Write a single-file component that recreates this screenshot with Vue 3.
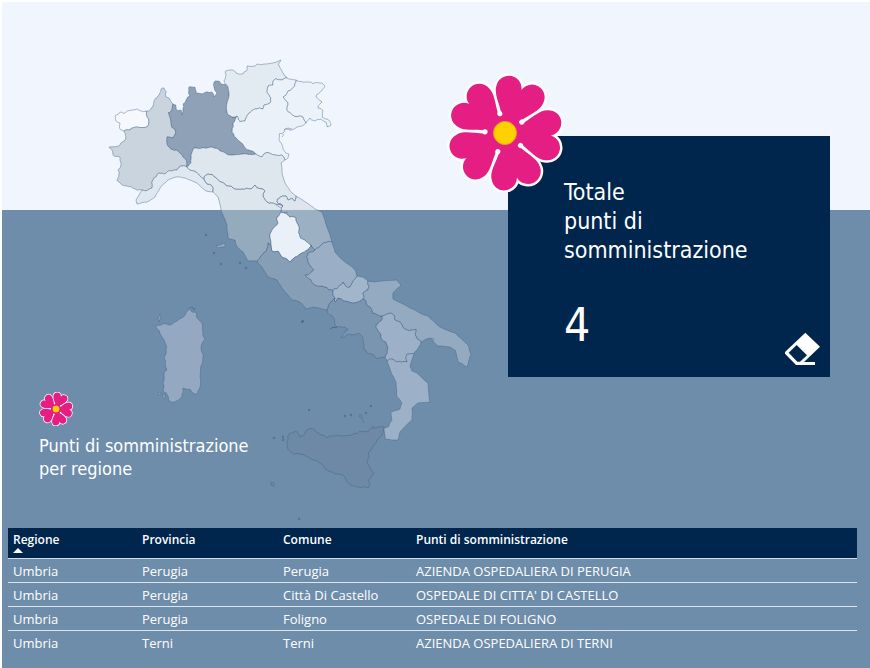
<script setup>
import { ref, computed } from 'vue'

// Border lines shared by neighbouring regions, as x,y pairs.
const arcs = {
  vdaNorth: '124,131 121,130 120,123 116,121 115,116 121,112 125,113 137,109 146,111',
  vdaSouth: '146,111 147,117 149,122 148,126 137,127 130,130 124,131',
  pieNorth: '146,111 153,107 154,101 159,95 161,89 164,88 166,97 173,104',
  pieLom: '173,104 172,110 168,113 171,121 173,128 176,134 173,138 167,137 167,143 171,149 177,150 183,157 187,163 187,167',
  pieLig: '187,167 180,166 177,170 172,171 165,174 159,173 153,180 152,188 142,190',
  pieWest: '142,190 135,189 127,186 121,184 117,180 118,170 121,163 120,157 113,155 109,147 120,145 126,137 124,131',
  ligCoast: '213,192 206,191 197,183 185,178 176,177 168,180 160,188 155,197 147,202 137,204 136,200 142,190',
  ligTos: '204,179 207,184 212,186 213,192',
  ligEmi: '187,167 195,171 200,176 204,179',
  lomNorth: '173,104 176,105 176,109 180,110 182,115 183,110 183,104 190,96 189,87 195,87 196,93 202,94 212,92 214,97 217,93 214,87 214,82 219,81 221,84 228,87',
  lomTre: '228,87 229,93 227,103 228,115 237,116',
  lomVen: '237,116 233,123 232,132 237,139 244,146 249,150 256,154',
  lomEmi: '256,154 243,154 230,155 220,151 212,147 202,148 194,148 191,155 191,163 187,167',
  treNorth: '228,87 224,81 225,72 233,70 236,73 243,74 247,66 257,64 265,64 281,60 278,64 283,73 287,78',
  treVen: '287,78 281,80 275,79 273,85 268,86 267,92 271,98 270,103 264,105 263,109 255,109 249,113 245,121 240,122 237,116',
  venNorth: '287,78 296,80',
  venFri: '296,80 295,84 288,91 283,97 288,103 287,110 294,116 303,117 306,123',
  friCoast: '296,80 307,82 320,83 325,86 320,92 316,97 322,102 318,108 323,111 322,117 327,119 331,125 327,127 326,122 321,119 315,121 310,118 306,123',
  venCoast: '306,123 297,127 289,130 285,129 283,133 279,134 279,140 282,144 283,149 289,154 285,160',
  venEmi: '256,154 262,157 265,153 282,155 285,160',
  emiCoast: '285,160 281,163 282,173 285,183 292,193 296,196',
  emiMar: '296,196 295,201 292,198 288,200 286,196 280,197 277,202 283,206',
  emiTos: '283,206 275,204 267,202 263,196 265,191 255,185 251,189 242,189 233,188 225,184 215,177 208,174 204,179',
  tosCoast: '213,192 218,197 221,210 223,215 227,225 228,238 235,240 236,245 243,252 248,261 257,261',
  tosMar: '283,206 281,212',
  tosUmb: '281,212 276,218 278,223 272,230 271,245',
  tosLaz: '271,245 268,243 267,250 262,255 257,261',
  umbMar: '281,212 285,213 290,217 296,218 299,227 300,237 305,240 311,245',
  umbLaz: '311,245 308,250 302,253 295,257 290,262 285,258 281,256 278,251 272,251 271,245',
  marCoast: '296,196 307,203 315,209 322,212 327,227 332,242',
  marAbr: '332,242 323,243 315,250',
  marLaz: '311,245 315,250',
  lazAbr: '315,250 308,253 308,262 314,270 305,275 315,285 325,287 333,290',
  lazMol: '333,290 335,298',
  lazCam: '335,298 330,303 327,310',
  lazCoast: '257,261 262,267 268,277 277,280 282,288 292,300 300,302 306,309 313,307 327,310',
  abrCoast: '332,242 335,252 345,262 355,270 357,276',
  abrMol: '333,290 340,285 343,282 347,287 350,287 357,276',
  molCoast: '357,276 363,277 368,281',
  molPug: '368,281 368,290 363,293 363,299',
  molCam: '363,299 352,303 338,298 335,302 335,298',
  camPug: '363,299 367,305 371,308 372,313 382,316',
  camBas: '382,316 381,321 376,325 381,338 388,348 385,357',
  camCoast: '327,310 333,317 337,327 330,329 337,327 345,327 348,330 341,337 350,334 359,333 363,340 363,348 372,354 377,359 385,357',
  pugBas: '382,316 391,313 395,316 395,320 400,322 407,330 416,329 417,338 421,342',
  pugCoast: '368,281 375,282 397,280 401,285 393,293 393,299 410,308 428,316 440,327 455,333 468,345 471,355 467,367 458,362 455,350 450,347 438,346 430,338 421,342',
  basIonio: '421,342 417,350 414,354',
  basCal: '414,354 407,354 407,362 397,362 390,359 387,361',
  basTirr: '387,361 385,357',
  calCoast: '387,361 391,372 396,382 397,397 402,403 400,409 391,412 392,420 388,427 384,428 385,439 398,440 400,432 412,420 412,408 418,403 430,402 428,383 418,374 412,371 410,366 414,354',
  sicilia: '287,442 289,434 296,431 300,437 305,434 307,430 313,429 318,433 327,438 335,436 352,435 360,431 368,432 375,428 384,427 377,440 369,452 367,463 374,474 369,480 368,488 357,487 348,483 343,475 332,472 320,463 308,457 293,454 287,447 287,442',
  sardegna: '157,325 168,325 177,321 187,311 189,308 192,312 197,313 197,318 202,323 203,332 205,339 201,349 203,357 200,377 199,390 197,394 190,389 183,388 182,397 177,401 171,402 168,396 163,390 164,373 167,370 164,358 166,350 162,337 156,328 157,325',
}

// Coasts and borders that run without small indentations.
const smooth = ['emiCoast', 'marCoast', 'abrCoast', 'molCoast', 'pugCoast', 'calCoast', 'tosCoast', 'lazCoast', 'ligCoast']

// Each outline lists its arcs in order; a leading "-" walks the arc backwards.
const regions = [
  { name: "Valle d'Aosta", fill: 'rgba(255,255,255,.3)', ring: 'vdaNorth vdaSouth' },
  { name: 'Piemonte', fill: '#c9d4de', ring: 'pieNorth pieLom pieLig pieWest -vdaSouth' },
  { name: 'Liguria', fill: '#dfe8f0', ring: 'ligEmi ligTos ligCoast -pieLig' },
  { name: 'Lombardia', fill: '#8ea1b6', ring: 'lomNorth lomTre lomVen lomEmi -pieLom' },
  { name: 'Trentino-Alto Adige', fill: '#e3ebf2', ring: 'treNorth treVen -lomTre' },
  { name: 'Veneto', fill: '#eaf1f9', ring: 'venNorth venFri venCoast -venEmi -lomVen -treVen' },
  { name: 'Friuli-Venezia Giulia', fill: '#ebf2fa', ring: 'friCoast -venFri' },
  { name: 'Emilia-Romagna', fill: '#dee7ee', ring: 'venEmi emiCoast emiMar emiTos -ligEmi -lomEmi' },
  { name: 'Toscana', fill: 'rgba(197,209,217,.44)', ring: 'ligTos tosCoast -tosLaz -tosUmb -tosMar emiTos' },
  { name: 'Marche', fill: 'rgba(203,213,222,.49)', ring: 'marCoast marAbr -marLaz -umbMar -tosMar -emiMar' },
  { name: 'Umbria', fill: '#e9f0f8', ring: 'umbMar umbLaz -tosUmb' },
  { name: 'Lazio', fill: '#879eb7', ring: 'marLaz lazAbr lazMol lazCam -lazCoast -tosLaz -umbLaz' },
  { name: 'Abruzzo', fill: '#9aafc5', ring: 'abrCoast -abrMol -lazAbr -marAbr' },
  { name: 'Molise', fill: '#a2b6cb', ring: 'molCoast molPug molCam -lazMol abrMol' },
  { name: 'Campania', fill: '#7a95af', ring: 'camPug camBas -camCoast -lazCam -molCam' },
  { name: 'Puglia', fill: '#94aac1', ring: 'pugCoast -pugBas -camPug -molPug' },
  { name: 'Basilicata', fill: '#9cb1c8', ring: 'pugBas basIonio basCal basTirr -camBas' },
  { name: 'Calabria', fill: '#9cb1c8', ring: 'calCoast basCal' },
  { name: 'Sicilia', fill: '#6e89a5', ring: 'sicilia' },
  { name: 'Sardegna', fill: '#94a9c1', ring: 'sardegna' },
]

const noise = (a, b) => {
  const n = Math.sin(a * 12.9898 + b * 78.233) * 43758.5453
  return (n - Math.floor(n)) * 2 - 1
}

// Midpoint displacement; equal end points always give the same midpoint.
function roughen(points, amount, depth) {
  if (!depth) return points
  const out = [points[0]]
  for (let i = 1; i < points.length; i++) {
    const [x0, y0] = points[i - 1]
    const [x1, y1] = points[i]
    const len = Math.min(Math.hypot(x1 - x0, y1 - y0), 9)
    const mx = (x0 + x1) / 2
    const my = (y0 + y1) / 2
    out.push([mx + noise(mx, my) * len * amount, my + noise(my, mx) * len * amount], points[i])
  }
  return roughen(out, amount, depth - 1)
}

const lines = {}
for (const [key, text] of Object.entries(arcs)) {
  const points = text.split(' ').map((p) => p.split(',').map(Number))
  lines[key] = roughen(points, smooth.includes(key) ? 0.05 : 0.17, 2)
}

const shapes = regions.map((r) => {
  const points = r.ring.split(' ').flatMap((key) =>
    key[0] === '-' ? [...lines[key.slice(1)]].reverse() : lines[key]
  )
  return { ...r, d: 'M' + points.map((p) => p.map((v) => v.toFixed(1)).join(' ')).join('L') + 'Z' }
})

const islets = [
  [206, 235], [214, 253], [221, 264], [240, 263], [246, 268], [302, 322], [303, 321],
  [274, 438], [283, 437], [283, 440], [309, 410], [345, 416], [351, 415], [366, 413], [371, 406], [299, 519],
]

const petals = [21, 93, 165, 237, 309]
const columns = ['Regione', 'Provincia', 'Comune', 'Punti di somministrazione']
const allRows = [
  ['Umbria', 'Perugia', 'Perugia', 'AZIENDA OSPEDALIERA DI PERUGIA'],
  ['Umbria', 'Perugia', 'Città Di Castello', "OSPEDALE DI CITTA' DI CASTELLO"],
  ['Umbria', 'Perugia', 'Foligno', 'OSPEDALE DI FOLIGNO'],
  ['Umbria', 'Terni', 'Terni', 'AZIENDA OSPEDALIERA DI TERNI'],
]
const ascending = ref(true)
const rows = computed(() => (ascending.value ? allRows : [...allRows].reverse()))
</script>

<template>
  <main class="report">
    <svg class="defs" aria-hidden="true">
      <symbol id="flower" viewBox="-59 -59 118 118">
        <g class="petal-edge">
          <path v-for="a in petals" :key="a" :transform="`rotate(${a})`" d="M0 0L-10.5 -17C-16 -26 -25 -33 -25 -42A12.7 12.7 0 0 1 0 -46A12.7 12.7 0 0 1 25 -42C25 -33 16 -26 10.5 -17Z" />
        </g>
        <g class="petal">
          <path v-for="a in petals" :key="a" :transform="`rotate(${a})`" d="M0 0L-10.5 -17C-16 -26 -25 -33 -25 -42A12.7 12.7 0 0 1 0 -46A12.7 12.7 0 0 1 25 -42C25 -33 16 -26 10.5 -17Z" />
          <circle r="19" />
        </g>
        <circle v-for="a in petals" :key="a" :transform="`rotate(${a + 36})`" cy="-20" r="2.6" fill="#fff" />
        <circle r="11.5" fill="#ffd000" stroke="#f39a1c" />
      </symbol>
    </svg>

    <section class="hero">
      <svg class="map" viewBox="0 0 506 526" role="img" aria-label="Italia">
        <g transform="translate(-2 -2)">
          <path v-for="s in shapes" :key="s.name" class="region" :d="s.d" :fill="s.fill" />
          <path class="region" fill="#94a9c1" d="M216 246L220 245L222 244L225 243L225 247L222 247L218 248Z" />
          <path class="region" fill="#94a9c1" d="M159 392l2 1l-1 2l-2-1zM163 394l2 1v4l-2-1zM159 322l-1-3l2-5l1 2zM196 308l-2 2M192 307l3 3" />
          <path class="region" fill="none" d="M271 482l3 1l0 3l-3-1zM360 414l2 2l-1 2l-2-2zM362 418l2 5M284 130l4-2l4 1M282 137l2-3" />
          <path class="region" fill="none" d="M281 208l-5-3M284 213l4-1M430 338l4 1l-2 3M374 428l-2-3M189 308l3-1l2 3" />
          <circle v-for="([x, y], i) in islets" :key="i" class="islet" :cx="x" :cy="y" r="1.2" />
        </g>
      </svg>

      <div class="legend">
        <svg class="legend-icon" aria-hidden="true"><use href="#flower" /></svg>
        <h1>Punti di somministrazione<br />per regione</h1>
      </div>

      <article class="card">
        <svg class="badge" aria-hidden="true"><use href="#flower" /></svg>
        <h2>Totale<br />punti di<br />somministrazione</h2>
        <p>4</p>
        <button type="button" class="reset" aria-label="Cancella filtri">
          <svg viewBox="42 36 111 102" aria-hidden="true">
            <path fill="#fff" fill-rule="evenodd" d="M106 38L150 80L102 126H135V135H78L45 101V96ZM80 75L56 98L82 125H90L111 106Z" />
          </svg>
        </button>
      </article>
    </section>

    <table>
      <colgroup><col class="c1" /><col class="c2" /><col class="c3" /><col /></colgroup>
      <thead>
        <tr>
          <th v-for="(c, i) in columns" :key="c" scope="col">
            <button v-if="i === 0" type="button" class="sort" @click="ascending = !ascending">
              {{ c }}
              <svg viewBox="0 0 10 5" :class="{ flipped: !ascending }" aria-hidden="true"><path d="M0 5L5 0L10 5Z" fill="#fff" /></svg>
            </button>
            <template v-else>{{ c }}</template>
          </th>
        </tr>
      </thead>
      <tbody>
        <tr v-for="r in rows" :key="r[3]">
          <td v-for="(v, i) in r" :key="i">{{ v }}</td>
        </tr>
      </tbody>
    </table>
  </main>
</template>

<style>
body {
  margin: 0;
  background: #fff;
}
</style>

<style scoped>
.report {
  box-sizing: border-box;
  min-height: 100vh;
  padding-bottom: 12px;
  border: solid #fff;
  border-width: 2px 0 0 2px;
  background: linear-gradient(#f1f6fe 208px, #6e8daa 208px);
  background-clip: padding-box;
  color: #fff;
  font-family: "Open Sans", "Noto Sans", sans-serif;
}
.defs {
  display: block;
  width: 0;
  height: 0;
}
.hero {
  display: grid;
  grid-template-columns: minmax(0, 1fr) 322px;
  padding-right: 40px;
}
.map {
  grid-area: 1 / 1;
  width: 100%;
}
.region {
  stroke: rgba(62, 94, 130, 0.42);
  stroke-width: 1;
  stroke-linejoin: round;
}
.islet {
  fill: rgba(62, 94, 130, 0.55);
}
.legend {
  grid-area: 1 / 1;
  align-self: end;
  padding: 0 0 48px 37px;
}
.legend-icon {
  display: block;
  width: 34px;
  height: 34px;
  margin-bottom: 8px;
}
h1,
h2,
.card p {
  font-family: "DejaVu Sans Condensed", "Noto Sans", sans-serif;
  font-weight: 400;
}
h1 {
  margin: 0;
  font-size: 18px;
  line-height: 23px;
}
.petal-edge {
  fill: #fff;
  stroke: #fff;
  stroke-width: 5;
}
.petal {
  fill: #e51e84;
}
.card {
  grid-area: 1 / 2;
  position: relative;
  align-self: start;
  box-sizing: border-box;
  height: 241px;
  margin-top: 134px;
  padding: 42px 56px;
  background: #00264d;
}
.badge {
  position: absolute;
  left: -62px;
  top: -62px;
  width: 118px;
  height: 118px;
}
h2 {
  margin: 0;
  font-size: 23px;
  line-height: 29px;
}
.card p {
  margin: 32px 0 0;
  font-size: 46px;
  line-height: 56px;
}
button {
  padding: 0;
  border: 0;
  background: none;
  color: inherit;
  font: inherit;
  cursor: pointer;
}
.reset {
  position: absolute;
  right: 9px;
  bottom: 11px;
}
.reset svg {
  display: block;
  width: 37px;
  height: 34px;
}
table {
  width: calc(100% - 19px);
  margin-left: 6px;
  border-collapse: collapse;
  table-layout: fixed;
  font-size: 13px;
  line-height: 17px;
}
.c1 {
  width: 129px;
}
.c2 {
  width: 141px;
}
.c3 {
  width: 133px;
}
th {
  height: 27px;
  padding: 3px 5px 0;
  border-bottom: 1px solid #d5dde5;
  background: #00264d;
  font-size: 12px;
  font-weight: 600;
  text-align: left;
  vertical-align: top;
}
.sort {
  display: block;
}
.sort svg {
  display: block;
  width: 10px;
  height: 5px;
}
.flipped {
  transform: scaleY(-1);
}
td {
  height: 17px;
  padding: 4px 5px 2px;
  border-bottom: 1px solid #dfe6ed;
  white-space: nowrap;
}
tbody tr:last-child td {
  border-bottom: 0;
}
</style>
